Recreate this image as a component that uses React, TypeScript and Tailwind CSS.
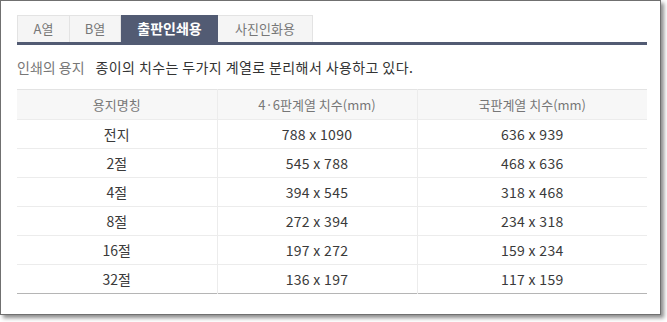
import React from "react";

const TABS = ["A열", "B열", "출판인쇄용", "사진인화용"];
const ACTIVE = 2;

const ROWS = [
  ["전지", "788 x 1090", "636 x 939"],
  ["2절", "545 x 788", "468 x 636"],
  ["4절", "394 x 545", "318 x 468"],
  ["8절", "272 x 394", "234 x 318"],
  ["16절", "197 x 272", "159 x 234"],
  ["32절", "136 x 197", "117 x 159"],
];

export default function App() {
  return (
    <div
      className="w-[667px] h-[322px] bg-white"
      style={{ fontFamily: '"Noto Sans CJK KR", "Noto Sans", sans-serif' }}
    >
      <div className="w-[661px] h-[315px] border border-[#707070] bg-white shadow-[3px_3px_4px_rgba(0,0,0,0.45)] pt-[14px] pl-4 pr-[13px]">
        {/* Tabs */}
        <div className="flex border-b-[3px] border-[#525b73] h-[30px]">
          {TABS.map((t, i) =>
            i === ACTIVE ? (
              <div
                key={t}
                className="w-[97px] flex items-center justify-center bg-[#525b73] text-white text-[14px] font-bold"
              >
                {t}
              </div>
            ) : (
              <div
                key={t}
                className={
                  "flex items-center justify-center bg-[#f5f5f5] border-t border-r border-[#e3e3e3] text-[#777] text-[13px] " +
                  (i === 0 ? "border-l w-[53px]" : i === 1 ? "w-[51px]" : "w-[95px]")
                }
              >
                {t}
              </div>
            )
          )}
        </div>

        {/* Description */}
        <div className="flex items-center h-[44px] text-[14px]">
          <span className="text-[#777] mr-[11px]">인쇄의 용지</span>
          <span className="text-[#333] tracking-[0.4px]">종이의 치수는 두가지 계열로 분리해서 사용하고 있다.</span>
        </div>

        {/* Table */}
        <table className="w-[630px] table-fixed border-collapse text-center">
          <colgroup>
            <col className="w-[200px]" />
            <col className="w-[200px]" />
            <col className="w-[230px]" />
          </colgroup>
          <thead>
            <tr className="h-[30px] bg-[#f7f7f7] text-[#777] text-[13px] border-t border-[#e3e3e3]">
              <th className="font-normal">용지명칭</th>
              <th className="font-normal border-l border-[#ececec]">4·6판계열 치수(mm)</th>
              <th className="font-normal border-l border-[#ececec]">국판계열 치수(mm)</th>
            </tr>
          </thead>
          <tbody className="text-[#3a3a3a] text-[14px] border-b border-[#b5b5b5]">
            {ROWS.map((r) => (
              <tr key={r[0]} className="h-[29px] border-t border-[#ececec]">
                <td>{r[0]}</td>
                <td className="border-l border-[#ececec] tracking-[0.3px]">{r[1]}</td>
                <td className="border-l border-[#ececec] tracking-[0.3px]">{r[2]}</td>
              </tr>
            ))}
          </tbody>
        </table>
      </div>
    </div>
  );
}
